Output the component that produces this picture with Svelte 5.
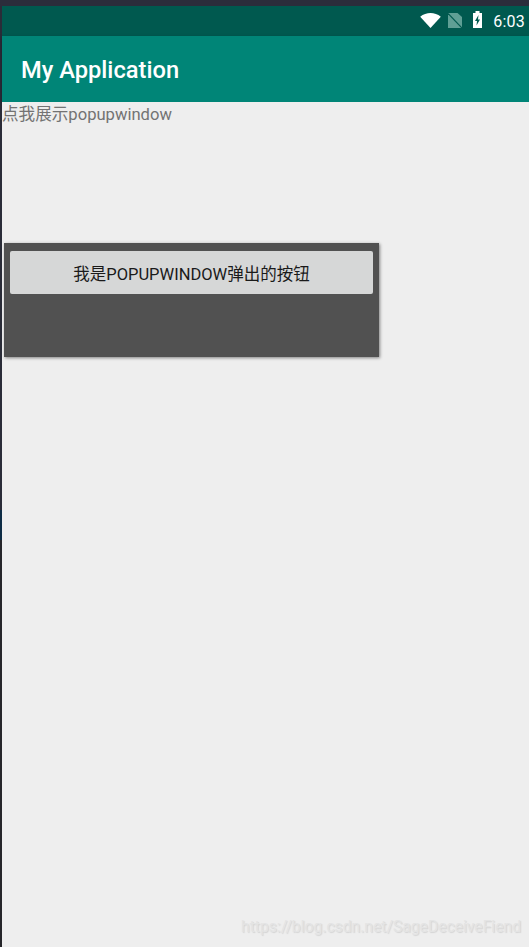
<script lang="ts">
	const title = "My Application";
	const time = "6:03";
</script>

<div class="screen">
	<div class="edge"></div>
	<div class="main">
		<div class="topStrip"></div>
		<div class="statusBar">
			<svg class="wifi" viewBox="0 0 22 16"><path d="M11 16 L0 4 C6.500 -1.300 15.500 -1.300 22 4 Z" fill="#fff"/></svg>
			<svg class="sim" viewBox="0 0 14 15">
				<path d="M0 0 H9.500 L14 4 V15 H0 Z" fill="#5f9f95"/>
				<path d="M0 0.500 L14 15" stroke="#00594f" stroke-width="1.200"/>
			</svg>
			<svg class="battery" viewBox="0 0 9 17">
				<path d="M2.500 2 V0 H6.500 V2 H9 V17 H0 V2 Z" fill="#fff"/>
				<path d="M5.500 4 L2 10 H4 L3.500 14.500 L7 8.500 H5 Z" fill="#00594f"/>
			</svg>
			<span class="time">{time}</span>
		</div>
		<div class="appBar">{title}</div>
		<div class="content">
			<div class="label">点我展示popupwindow</div>
			<div class="popup">
				<div class="button">我是POPUPWINDOW弹出的按钮</div>
			</div>
			<div class="watermark">https://blog.csdn.net/SageDeceiveFiend</div>
		</div>
	</div>
</div>

<style>
	:global(body) {
		margin: 0;
		background: #eeeeee;
	}

	.screen {
		display: flex;
		width: 529px;
		height: 947px;
		overflow: hidden;
		font-family: Roboto, "Noto Sans CJK SC", sans-serif;
	}

	.edge {
		width: 2px;
		flex-shrink: 0;
		background: linear-gradient(to bottom, #2a2c38 0, #2a2c38 510px, #0d2c45 510px, #0d2c45 540px, #26262a 540px);
	}

	.main {
		flex: 1;
		display: flex;
		flex-direction: column;
		min-width: 0;
	}

	.topStrip {
		height: 6px;
		margin-left: -2px;
		background: #2b2d3b;
	}

	.statusBar {
		height: 30px;
		display: flex;
		align-items: center;
		justify-content: flex-end;
		padding-right: 4px;
		background: #00594f;
	}

	.wifi {
		width: 21px;
		height: 15px;
		margin: 0 7px 1px 0;
	}

	.sim {
		width: 14px;
		height: 15px;
		margin: 0 11px 1px 0;
	}

	.battery {
		width: 9px;
		height: 17px;
		margin: 0 11px 3px 0;
	}

	.time {
		color: #fff;
		font-size: 16px;
		letter-spacing: 0.2px;
	}

	.appBar {
		height: 66px;
		display: flex;
		align-items: center;
		padding: 2px 0 0 19px;
		box-sizing: border-box;
		color: #fff;
		font-size: 23.7px;
		font-weight: 500;
		background: #008577;
		box-shadow: 0 2px 4px rgba(0, 0, 0, 0.3);
		position: relative;
	}

	.content {
		flex: 1;
		position: relative;
		background: #eeeeee;
	}

	.label {
		height: 23px;
		padding-top: 1px;
		line-height: 24px;
		color: #737373;
		font-size: 16.6px;
	}

	.popup {
		width: 375px;
		height: 114px;
		margin: 117px 0 0 2px;
		padding: 8px 6px;
		box-sizing: border-box;
		background: #515151;
		box-shadow: 1px 1px 3px rgba(0, 0, 0, 0.45);
	}

	.button {
		height: 43px;
		display: flex;
		align-items: center;
		justify-content: center;
		border-radius: 2px;
		color: #1a1a1a;
		font-size: 16.5px;
		background: #d6d7d7;
	}

	.watermark {
		position: absolute;
		right: 8px;
		bottom: 11px;
		color: #e4e4e4;
		font-size: 15.7px;
		text-shadow: 1px 1px 1px #d4d4d4;
		white-space: nowrap;
	}
</style>
